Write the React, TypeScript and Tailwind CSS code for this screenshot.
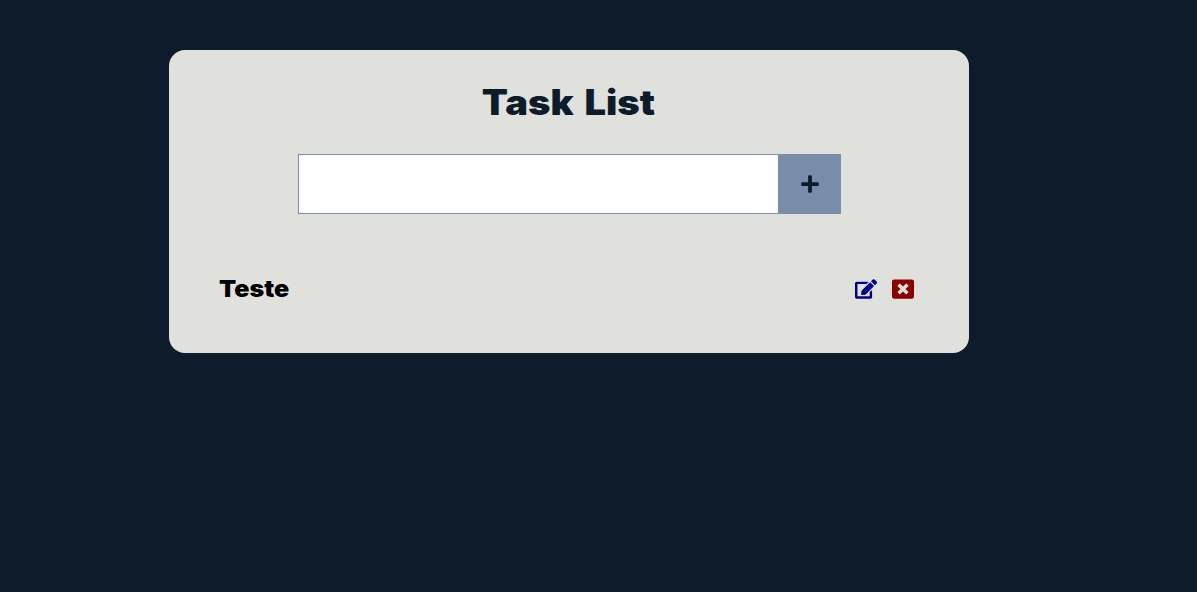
import { FaPlus, FaEdit, FaWindowClose } from "react-icons/fa";

export default function App() {
  return (
    <div className="min-h-screen bg-[#0d1b2a] pl-[169px] pt-[50px] font-['Inter',sans-serif]">
      <main className="h-[303px] w-[800px] rounded-[16px] bg-[#e0e1dd] px-[50px] pt-[30px]">
        <h1 className="pr-px text-center text-[35px] font-black leading-[44px] text-[#0d1b2a]">
          <span className="inline-block scale-x-[1.09] [word-spacing:3px]">Task List</span>
        </h1>
        <form className="mx-auto mt-[30px] flex h-[60px] w-[543px]">
          <input aria-label="Task" className="w-[480px] border border-r-0 border-[#778da9] bg-white px-4 text-xl outline-none" />
          <button type="button" aria-label="Add" className="flex flex-1 items-center justify-center bg-[#778da9] pl-px text-[#0d1b2a]">
            <FaPlus size={20} />
          </button>
        </form>
        <ul className="mt-[60px]">
          <li className="flex h-[30px] items-center justify-between">
            <span className="origin-left scale-x-[1.09] text-[23px] font-black leading-[30px] text-black">Teste</span>
            <span className="flex items-center gap-[15px] pr-[5px]">
              <FaEdit size={22} className="text-[#00008b]" />
              <FaWindowClose size={22} className="text-[#8b0000]" />
            </span>
          </li>
        </ul>
      </main>
    </div>
  );
}
